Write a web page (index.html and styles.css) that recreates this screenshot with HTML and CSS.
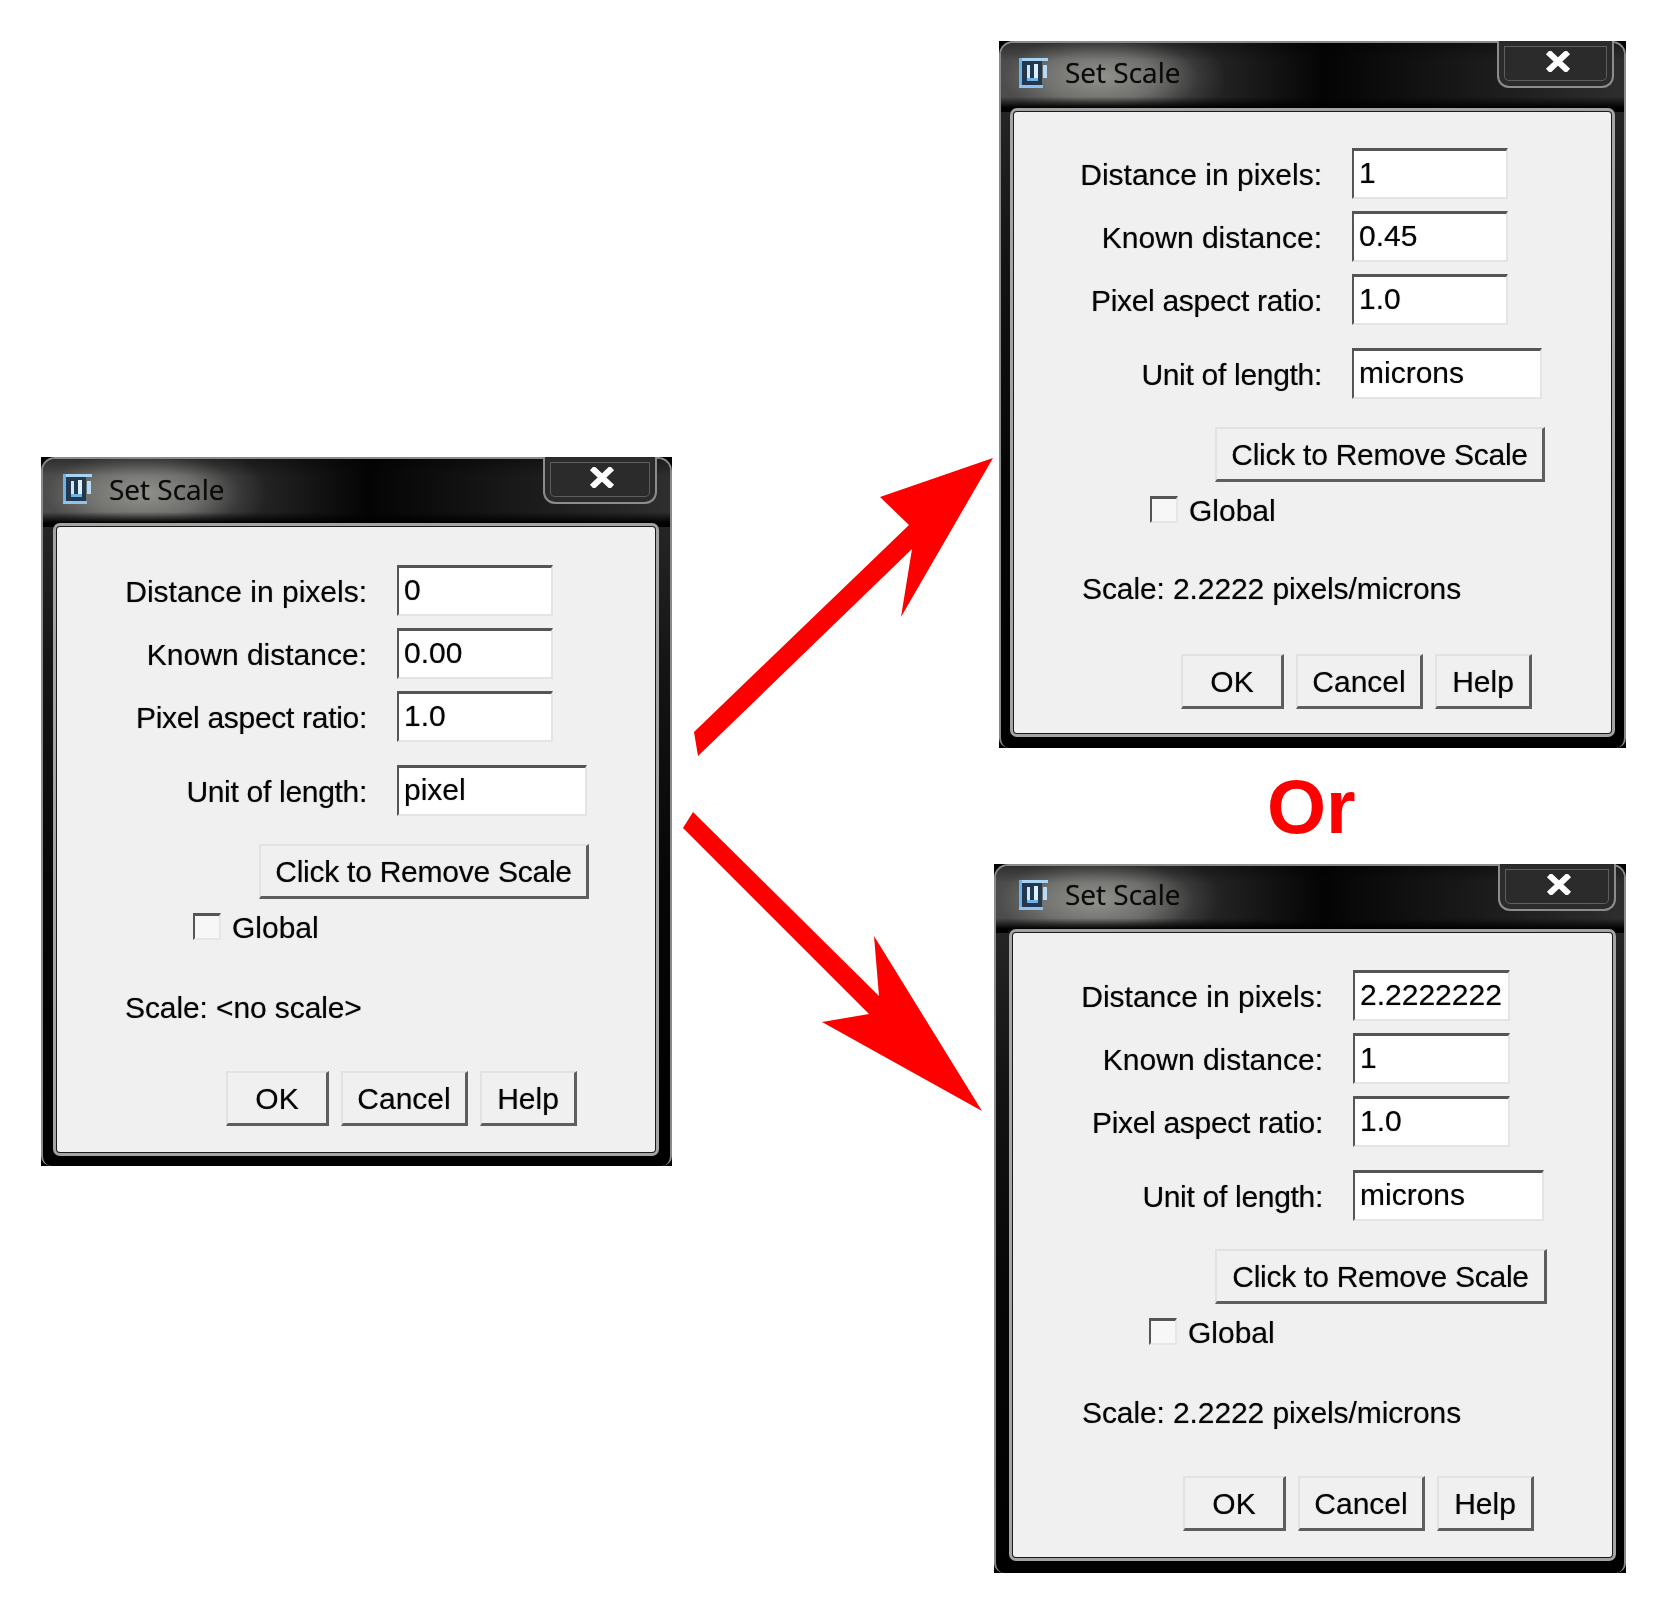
FILE: index.html
```html
<!DOCTYPE html>
<html lang="en">
<head>
  <meta charset="UTF-8" />
  <title>Set Scale</title>
  <link rel="stylesheet" href="styles.css">
</head>
<body>

<div class="page">

  <svg class="arrows" width="1656" height="1608" viewBox="0 0 1656 1608">
    <polygon points="694,732 698,756 912,549 901,617 993,458 880,497 909,525" />
    <polygon points="693,812 683,828 869,1014 822,1022 982,1111 874,936 879,996" />
  </svg>

  <div class="or-text">Or</div>

  <!-- left dialog -->
  <div class="dialog dialog-left">
    <div class="frame">
      <div class="titlebar">
        <svg class="app-icon" width="29" height="31" viewBox="0 0 29 31">
          <rect x="3" y="3" width="20" height="24" fill="#21384f" />
          <rect x="0" y="0" width="29" height="3" fill="#a8d3f2" />
          <rect x="0" y="0" width="3" height="30" fill="#6fb2e8" />
          <rect x="0" y="27" width="24" height="3" fill="#8fc3ec" />
          <rect x="8" y="7" width="3" height="14" fill="#cfe6fb" />
          <rect x="15" y="6" width="4" height="16" fill="#dcefff" />
          <rect x="8" y="20" width="11" height="3" fill="#6fb2e8" />
          <rect x="24" y="7" width="4" height="13" fill="#b8daf5" />
        </svg>
        <span class="title">Set Scale</span>
        <div class="close-btn">
          <svg width="26" height="21" viewBox="0 0 26 21"><path d="M3 1 L23 20 M23 1 L3 20" stroke="#fff" stroke-width="6" fill="none" /></svg>
        </div>
      </div>
      <div class="client">
        <div class="row"><span class="label">Distance in pixels:</span><div class="field">0</div></div>
        <div class="row"><span class="label">Known distance:</span><div class="field">0.00</div></div>
        <div class="row"><span class="label label-tight">Pixel aspect ratio:</span><div class="field">1.0</div></div>
        <div class="row row-unit"><span class="label label-tight">Unit of length:</span><div class="field field-wide">pixel</div></div>
        <div class="btn btn-remove">Click to Remove Scale</div>
        <div class="check-row"><span class="checkbox"></span><span class="check-label">Global</span></div>
        <div class="scale-text">Scale: &lt;no scale&gt;</div>
        <div class="btn-row">
          <div class="btn btn-ok">OK</div>
          <div class="btn btn-cancel">Cancel</div>
          <div class="btn btn-help">Help</div>
        </div>
      </div>
    </div>
  </div>

  <!-- top right dialog -->
  <div class="dialog dialog-top">
    <div class="frame">
      <div class="titlebar">
        <svg class="app-icon" width="29" height="31" viewBox="0 0 29 31">
          <rect x="3" y="3" width="20" height="24" fill="#21384f" />
          <rect x="0" y="0" width="29" height="3" fill="#a8d3f2" />
          <rect x="0" y="0" width="3" height="30" fill="#6fb2e8" />
          <rect x="0" y="27" width="24" height="3" fill="#8fc3ec" />
          <rect x="8" y="7" width="3" height="14" fill="#cfe6fb" />
          <rect x="15" y="6" width="4" height="16" fill="#dcefff" />
          <rect x="8" y="20" width="11" height="3" fill="#6fb2e8" />
          <rect x="24" y="7" width="4" height="13" fill="#b8daf5" />
        </svg>
        <span class="title">Set Scale</span>
        <div class="close-btn">
          <svg width="26" height="21" viewBox="0 0 26 21"><path d="M3 1 L23 20 M23 1 L3 20" stroke="#fff" stroke-width="6" fill="none" /></svg>
        </div>
      </div>
      <div class="client">
        <div class="row"><span class="label">Distance in pixels:</span><div class="field">1</div></div>
        <div class="row"><span class="label">Known distance:</span><div class="field">0.45</div></div>
        <div class="row"><span class="label label-tight">Pixel aspect ratio:</span><div class="field">1.0</div></div>
        <div class="row row-unit"><span class="label label-tight">Unit of length:</span><div class="field field-wide">microns</div></div>
        <div class="btn btn-remove">Click to Remove Scale</div>
        <div class="check-row"><span class="checkbox"></span><span class="check-label">Global</span></div>
        <div class="scale-text">Scale: 2.2222 pixels/microns</div>
        <div class="btn-row">
          <div class="btn btn-ok">OK</div>
          <div class="btn btn-cancel">Cancel</div>
          <div class="btn btn-help">Help</div>
        </div>
      </div>
    </div>
  </div>

  <!-- bottom right dialog -->
  <div class="dialog dialog-bottom">
    <div class="frame">
      <div class="titlebar">
        <svg class="app-icon" width="29" height="31" viewBox="0 0 29 31">
          <rect x="3" y="3" width="20" height="24" fill="#21384f" />
          <rect x="0" y="0" width="29" height="3" fill="#a8d3f2" />
          <rect x="0" y="0" width="3" height="30" fill="#6fb2e8" />
          <rect x="0" y="27" width="24" height="3" fill="#8fc3ec" />
          <rect x="8" y="7" width="3" height="14" fill="#cfe6fb" />
          <rect x="15" y="6" width="4" height="16" fill="#dcefff" />
          <rect x="8" y="20" width="11" height="3" fill="#6fb2e8" />
          <rect x="24" y="7" width="4" height="13" fill="#b8daf5" />
        </svg>
        <span class="title">Set Scale</span>
        <div class="close-btn">
          <svg width="26" height="21" viewBox="0 0 26 21"><path d="M3 1 L23 20 M23 1 L3 20" stroke="#fff" stroke-width="6" fill="none" /></svg>
        </div>
      </div>
      <div class="client">
        <div class="row"><span class="label">Distance in pixels:</span><div class="field">2.2222222</div></div>
        <div class="row"><span class="label">Known distance:</span><div class="field">1</div></div>
        <div class="row"><span class="label label-tight">Pixel aspect ratio:</span><div class="field">1.0</div></div>
        <div class="row row-unit"><span class="label label-tight">Unit of length:</span><div class="field field-wide">microns</div></div>
        <div class="btn btn-remove">Click to Remove Scale</div>
        <div class="check-row"><span class="checkbox"></span><span class="check-label">Global</span></div>
        <div class="scale-text">Scale: 2.2222 pixels/microns</div>
        <div class="btn-row">
          <div class="btn btn-ok">OK</div>
          <div class="btn btn-cancel">Cancel</div>
          <div class="btn btn-help">Help</div>
        </div>
      </div>
    </div>
  </div>

</div>

</body>
</html>
```

FILE: styles.css
```css
body {
  margin: 0;
  background: #fff;
  font-family: "Liberation Sans", Arial, sans-serif;
  color: #050505;
}
.page {
  position: relative;
  width: 1656px;
  height: 1608px;
  overflow: hidden;
}
.arrows {
  position: absolute;
  left: 0;
  top: 0;
}
.arrows polygon {
  fill: #ff0000;
}
.or-text {
  position: absolute;
  left: 1267px;
  top: 769px;
  font-size: 76px;
  line-height: 1;
  font-weight: bold;
  color: #ff0000;
}

/* windows sit on the free canvas */
.dialog {
  position: absolute;
  background: #000;
  filter: blur(0.5px);
}
.dialog-left { left: 41px; top: 457px; width: 631px; height: 709px; }
.dialog-top { left: 999px; top: 41px; width: 627px; height: 707px; }
.dialog-bottom { left: 994px; top: 864px; width: 632px; height: 709px; }

.frame {
  box-sizing: border-box;
  height: 100%;
  display: flex;
  flex-direction: column;
  border: 2px solid #8a8a8a;
  border-bottom: none;
  border-radius: 14px 14px 10px 10px;
  background: linear-gradient(to bottom, #2c2c2c 0, #141414 30%, #060606 60%, #000 100%);
}

.titlebar {
  display: flex;
  align-items: center;
  padding-bottom: 8px;
  box-sizing: border-box;
  border-radius: 12px 12px 0 0;
  background:
    linear-gradient(to bottom, rgba(0,0,0,0.35) 0, rgba(0,0,0,0) 25%, rgba(0,0,0,0) 78%, #000 94%),
    radial-gradient(ellipse 125px 55px at 100px 34px, rgba(150,150,146,0.95) 0, rgba(125,125,122,0.8) 45%, rgba(90,90,90,0.3) 78%, rgba(90,90,90,0) 100%),
    linear-gradient(to right, #484848 0, #2c2c2c 30%, #040404 52%, #161616 72%, #2e2e2e 100%);
}
.dialog-left .titlebar { height: 68px; padding-left: 20px; padding-right: 13px; }
.dialog-top .titlebar { height: 69px; padding-left: 18px; padding-right: 10px; }
.dialog-bottom .titlebar { height: 67px; padding-left: 23px; padding-right: 8px; }

.title {
  margin-left: 17px;
  font-family: "Open Sans", sans-serif;
  font-size: 28px;
  color: #0a0a0a;
  text-shadow: 0 0 1px rgba(0,0,0,0.6);
}
.dialog-top .title, .dialog-bottom .title { margin-bottom: 3px; }

.close-btn {
  margin-left: auto;
  align-self: flex-start;
  margin-top: -2px;
  height: 47px;
  box-sizing: border-box;
  display: flex;
  align-items: center;
  justify-content: center;
  padding: 0 0 5px 4px;
  border: 2px solid #8c8c8c;
  border-top: none;
  border-radius: 0 0 12px 12px;
  background: #2b2b2b;
  box-shadow: inset 0 0 0 5px #2b2b2b, inset 0 0 0 6px #5e5e5e;
}
.dialog-left .close-btn { width: 114px; }
.dialog-top .close-btn { width: 117px; }
.dialog-bottom .close-btn { width: 118px; }

.client {
  flex: 1;
  border-radius: 3px;
  background: #f0f0f0;
  font-size: 30px;
  text-shadow: 0 0 1px rgba(0,0,0,0.55);
  box-shadow: 0 0 0 1px #1a1a1a, 0 0 0 4px #a4a4a4;
}
.dialog-left .client { margin: 0 15px 14px 14px; padding-top: 38px; }
.dialog-top .client { margin: 0 13px 15px; padding-top: 36px; }
.dialog-bottom .client { margin: 0 12px 16px 17px; padding-top: 37px; }

.row {
  display: flex;
  align-items: center;
  height: 51px;
  margin-bottom: 12px;
}
.row-unit {
  margin-top: 23px;
  margin-bottom: 0;
}
.label {
  width: 310px;
  padding-top: 2px;
  text-align: right;
}
.label-tight {
  letter-spacing: -0.3px;
}
.dialog-top .label { width: 308px; }

.field {
  box-sizing: border-box;
  width: 156px;
  height: 51px;
  margin-left: 30px;
  padding: 0 0 3px 5px;
  display: flex;
  align-items: center;
  background: #fff;
  border-top: 3px solid #555;
  border-left: 2px solid #555;
  border-right: 2px solid #e4e4e4;
  border-bottom: 2px solid #e4e4e4;
}
.field-wide {
  width: 190px;
}
.dialog-bottom .field { width: 157px; }
.dialog-bottom .field-wide { width: 191px; }

.btn {
  box-sizing: border-box;
  height: 55px;
  padding-top: 2px;
  display: flex;
  align-items: center;
  justify-content: center;
  background: #f0f0f0;
  border-top: 2px solid #e2e2e2;
  border-left: 2px solid #e2e2e2;
  border-right: 3px solid #5e5e5e;
  border-bottom: 3px solid #5e5e5e;
}
.btn-remove {
  width: 330px;
  margin: 28px 0 0 202px;
  letter-spacing: -0.25px;
}
.dialog-top .btn-remove { margin-left: 201px; }
.dialog-bottom .btn-remove { width: 332px; }

.check-row {
  display: flex;
  align-items: center;
  height: 27px;
  margin: 14px 0 0 136px;
}
.checkbox {
  box-sizing: border-box;
  width: 28px;
  height: 27px;
  margin-right: 11px;
  background: #f7f7f7;
  border-top: 3px solid #555;
  border-left: 2px solid #555;
  border-right: 2px solid #e6e6e6;
  border-bottom: 2px solid #e6e6e6;
}
.check-label {
  padding-top: 2px;
}

.scale-text {
  margin: 51px 0 0 68px;
  line-height: 34px;
  letter-spacing: -0.1px;
}
.dialog-top .scale-text { margin-top: 49px; }
.dialog-bottom .scale-text { margin-left: 69px; }

.btn-row {
  display: flex;
  gap: 12px;
  margin: 46px 0 0 169px;
}
.dialog-top .btn-row { margin-top: 48px; margin-left: 167px; }
.dialog-bottom .btn-row { margin-left: 170px; }
.btn-ok { width: 103px; }
.btn-cancel { width: 127px; }
.btn-help { width: 97px; }
```
